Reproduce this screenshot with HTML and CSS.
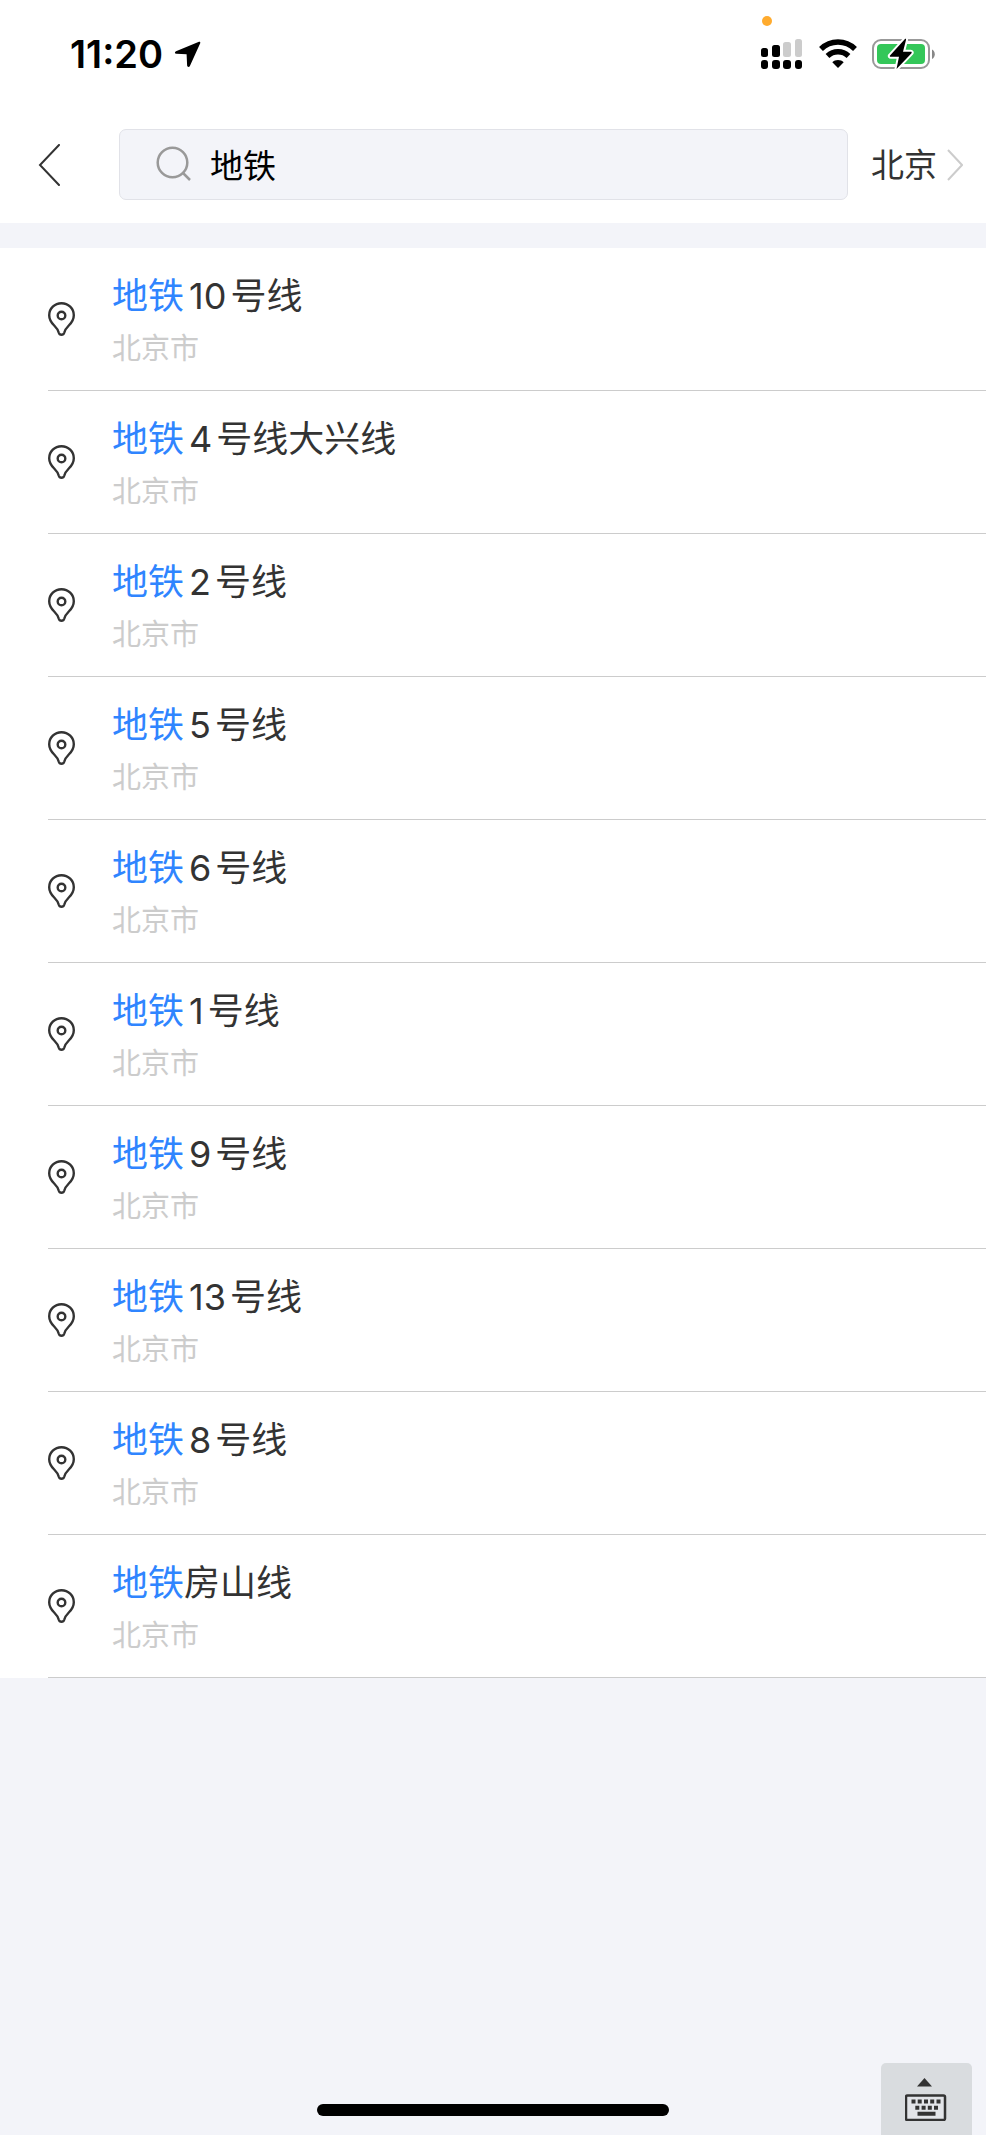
FILE: index.html
```html
<!DOCTYPE html>
<html lang="zh-CN">
<head>
    <meta charset="UTF-8">
    <meta name="viewport" content="width=device-width, initial-scale=1.0">
    <title>地铁</title>
    <link rel="stylesheet" href="styles.css">
</head>
<body>
    <!-- shared pin icon -->
    <svg class="sprite" width="0" height="0" aria-hidden="true">
        <symbol id="pin" viewBox="0 0 27 34">
            <path d="M13.5 1.2C6.700 1.200 1.200 6.500 1.200 13.200C1.200 17.600 3.200 20.500 6.200 23.500C8.500 25.800 10.200 27.800 10.800 30.800C11.200 32.300 12.100 32.800 13.500 32.800S15.800 32.300 16.200 30.800C16.800 27.800 18.500 25.800 20.800 23.500C23.800 20.500 25.800 17.600 25.800 13.200C25.800 6.500 20.300 1.200 13.500 1.200Z"/>
            <circle cx="13.500" cy="13.500" r="3.800"/>
        </symbol>
    </svg>

    <div class="status-bar">
        <span class="time">11:20</span>
        <svg class="location" width="27" height="27" viewBox="0 0 27 27">
            <path d="M25 .8L2 10.300C.4 11 .6 12.700 2.300 12.800L12.600 13.200L13.100 24.300C13.200 26.200 15.200 26.500 15.900 24.900L26.200 2.300C26.600 1.200 26 .5 25 .8Z"/>
        </svg>
        <div class="signal">
            <span class="dot"></span>
            <svg width="41" height="30" viewBox="0 0 41 30">
                <rect x="0" y="9" width="7" height="9" rx="2.500"/>
                <rect x="11" y="6" width="8" height="12" rx="2.500"/>
                <rect class="off" x="22" y="3" width="8" height="15" rx="2.500"/>
                <rect class="off" x="34" y="0" width="7" height="18" rx="2.500"/>
                <rect x="0" y="21" width="7" height="9" rx="3"/>
                <rect x="11" y="21" width="8" height="9" rx="3"/>
                <rect x="22" y="21" width="8" height="9" rx="3"/>
                <rect x="34" y="21" width="7" height="9" rx="3"/>
            </svg>
        </div>
        <svg class="wifi" width="38" height="30" viewBox="0 0 38 30">
            <path d="M2 10C11.500 .7 26.500 .7 36 10" fill="none" stroke="#000" stroke-width="5.500"/>
            <path d="M8.500 17C14.500 11.400 23.500 11.400 29.500 17" fill="none" stroke="#000" stroke-width="5.500"/>
            <path d="M19 29L13.300 23.300C16.200 20.300 21.800 20.300 24.700 23.300Z"/>
        </svg>
        <svg class="battery" width="63" height="32" viewBox="0 0 63 32">
            <rect x="1" y="2" width="56" height="28" rx="8" fill="none" stroke="#999" stroke-width="2"/>
            <rect x="5" y="6" width="48" height="20" rx="4" fill="#34c759"/>
            <path d="M60 11.500C63.700 13 63.700 19.500 60 21Z" fill="#888"/>
            <path d="M33 1L18 17.500C17.500 18.200 18 18.800 18.700 18.800H27L24.500 31L39.500 15.200C40 14.500 39.600 13.800 38.800 13.800H31L34 2C34.200 1 33.700 .4 33 1Z" stroke="#fff" stroke-width="4" paint-order="stroke" stroke-linejoin="round"/>
        </svg>
    </div>

    <header class="header">
        <button class="back" type="button" aria-label="返回">
            <svg width="24" height="42" viewBox="0 0 24 42">
                <path d="M21 1L2 21L21 41"/>
            </svg>
        </button>
        <label class="search">
            <svg width="36" height="36" viewBox="0 0 36 36">
                <circle cx="16.500" cy="16.500" r="14.800"/>
                <path d="M26.500 26.500L34 34"/>
            </svg>
            <input type="text" value="地铁" aria-label="搜索">
        </label>
        <button class="city" type="button">
            <span>北京</span>
            <svg width="16" height="32" viewBox="0 0 16 32">
                <path d="M1 1L15 16L1 31"/>
            </svg>
        </button>
    </header>

    <ul class="results">
        <li class="item">
            <svg class="pin"><use href="#pin"/></svg>
            <div class="text">
                <p class="name"><em>地铁</em><span class="num">10</span>号线</p>
                <p class="area">北京市</p>
            </div>
        </li>
        <li class="item">
            <svg class="pin"><use href="#pin"/></svg>
            <div class="text">
                <p class="name"><em>地铁</em><span class="num">4</span>号线大兴线</p>
                <p class="area">北京市</p>
            </div>
        </li>
        <li class="item">
            <svg class="pin"><use href="#pin"/></svg>
            <div class="text">
                <p class="name"><em>地铁</em><span class="num">2</span>号线</p>
                <p class="area">北京市</p>
            </div>
        </li>
        <li class="item">
            <svg class="pin"><use href="#pin"/></svg>
            <div class="text">
                <p class="name"><em>地铁</em><span class="num">5</span>号线</p>
                <p class="area">北京市</p>
            </div>
        </li>
        <li class="item">
            <svg class="pin"><use href="#pin"/></svg>
            <div class="text">
                <p class="name"><em>地铁</em><span class="num">6</span>号线</p>
                <p class="area">北京市</p>
            </div>
        </li>
        <li class="item">
            <svg class="pin"><use href="#pin"/></svg>
            <div class="text">
                <p class="name"><em>地铁</em><span class="num">1</span>号线</p>
                <p class="area">北京市</p>
            </div>
        </li>
        <li class="item">
            <svg class="pin"><use href="#pin"/></svg>
            <div class="text">
                <p class="name"><em>地铁</em><span class="num">9</span>号线</p>
                <p class="area">北京市</p>
            </div>
        </li>
        <li class="item">
            <svg class="pin"><use href="#pin"/></svg>
            <div class="text">
                <p class="name"><em>地铁</em><span class="num">13</span>号线</p>
                <p class="area">北京市</p>
            </div>
        </li>
        <li class="item">
            <svg class="pin"><use href="#pin"/></svg>
            <div class="text">
                <p class="name"><em>地铁</em><span class="num">8</span>号线</p>
                <p class="area">北京市</p>
            </div>
        </li>
        <li class="item">
            <svg class="pin"><use href="#pin"/></svg>
            <div class="text">
                <p class="name"><em>地铁</em>房山线</p>
                <p class="area">北京市</p>
            </div>
        </li>
    </ul>

    <div class="home-bar"></div>
    <button class="keyboard" type="button" aria-label="键盘">
        <svg width="42" height="43" viewBox="0 0 42 43">
            <path d="M12 8.500L19.500 0L27 8.500Z"/>
            <rect x="1" y="17.500" width="39" height="24.500" rx="1.500" fill="#e2e4e8" stroke="#333" stroke-width="2.500"/>
            <path d="M6.500 21.500h4v4h-4zM12.700 21.500h4v4h-4zM19 21.500h4v4h-4zM25.200 21.500h4v4h-4zM31.500 21.500h4v4h-4zM10.300 27.700h4v4h-4zM16.600 27.700h4v4h-4zM22.800 27.700h4v4h-4zM29 27.700h4v4h-4zM12.500 33.800h18v4h-18z"/>
        </svg>
    </button>
</body>
</html>
```
FILE: styles.css
```css
* {
    box-sizing: border-box;
}

body {
    margin: 0;
    min-height: 100vh;
    font-family: Inter, "Noto Sans CJK SC", sans-serif;
    background-color: #f3f4f9;
    color: #333;
}

button {
    padding: 0;
    border: none;
    background: none;
    font: inherit;
    color: inherit;
    cursor: pointer;
}

svg {
    display: block;
    flex: none;
}

.sprite {
    position: absolute;
}

/* status bar */
.status-bar {
    display: flex;
    align-items: center;
    height: 108px;
    padding: 0 51px 0 70px;
    background-color: #fff;
    color: #000;
}
.time {
    font-size: 38px;
    font-weight: 600;
    line-height: 44px;
}
.location {
    margin-left: 11px;
}
.signal {
    position: relative;
    margin-left: auto;
}
.signal .off {
    fill: #ccc;
}
.dot {
    position: absolute;
    top: -23px;
    left: 1px;
    width: 10px;
    height: 10px;
    border-radius: 50%;
    background-color: #ffab2e;
}
.wifi {
    margin-left: 17px;
}
.battery {
    margin-left: 15px;
}

/* search header */
.header {
    display: flex;
    align-items: center;
    padding: 21px 23px 23px 38px;
    background-color: #fff;
    font-size: 33px;
}
.back {
    width: 81px;
}
.back path {
    fill: none;
    stroke: #333;
    stroke-width: 2;
    stroke-linecap: round;
}
.search {
    display: flex;
    flex: 1;
    align-items: center;
    min-width: 0;
    height: 71px;
    padding: 0 36px 2px;
    border: 1px solid #e1e2e8;
    border-radius: 7px;
    background-color: #f3f4f9;
}
.search svg {
    fill: none;
    stroke: #999;
    stroke-width: 2.5px;
}
.search input {
    flex: 1;
    min-width: 0;
    height: 48px;
    margin-left: 18px;
    padding: 0;
    border: none;
    outline: none;
    background: none;
    font: inherit;
    color: #000;
}
.city {
    display: flex;
    align-items: center;
    gap: 10px;
    margin-left: 23px;
    line-height: 48px;
}
.city path {
    fill: none;
    stroke: #ccc;
    stroke-width: 2;
}

/* result list */
.results {
    margin: 25px 0 0;
    padding: 0;
    list-style: none;
    background-color: #fff;
}
.item {
    position: relative;
    display: flex;
    align-items: center;
    height: 143px;
    padding: 0 0 1px 48px;
}
.item::after {
    content: "";
    position: absolute;
    left: 48px;
    right: 0;
    bottom: 0;
    height: 1px;
    background-color: #ccc;
}
.pin {
    width: 27px;
    height: 34px;
    margin-right: 37px;
    fill: none;
    stroke: #333;
    stroke-width: 2.4px;
}
.text {
    padding-top: 3px;
}
.name,
.area {
    margin: 0;
}
.name {
    font-size: 36px;
    line-height: 56px;
}
.name em {
    font-style: normal;
    color: #2f85ff;
}
.num {
    margin: 0 4px 0 5px;
}
.area {
    margin-top: 1px;
    font-size: 29px;
    line-height: 48px;
    color: #ccc;
}

/* bottom overlays */
.home-bar {
    position: fixed;
    bottom: 19px;
    left: 50%;
    width: 352px;
    height: 12px;
    margin-left: -176px;
    border-radius: 6px;
    background-color: #000;
}
.keyboard {
    position: fixed;
    right: 14px;
    bottom: 0;
    display: flex;
    justify-content: center;
    width: 91px;
    height: 72px;
    padding: 15px 2px 0 0;
    border-radius: 5px 5px 0 0;
    background-color: #d9dcdf;
}
.keyboard svg {
    fill: #333;
}
```
